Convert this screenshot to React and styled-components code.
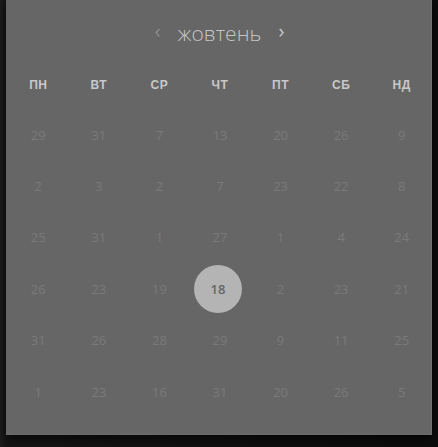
import React from 'react'
import styled, {createGlobalStyle} from 'styled-components'

const GlobalStyle = createGlobalStyle`
    html, body{
        margin: 0;
        padding: 0;
        background: #141414;
        width: 438px;
        height: 447px;
        overflow: hidden;
    }
`

const days = ['пн', 'вт', 'ср', 'чт', 'пт', 'сб', 'нд']

const weeks = [
    [29, 31, 7, 13, 20, 26, 9],
    [2, 3, 2, 7, 23, 22, 8],
    [25, 31, 1, 27, 1, 4, 24],
    [26, 23, 19, 18, 2, 23, 21],
    [31, 26, 28, 29, 9, 11, 25],
    [1, 23, 16, 31, 20, 26, 5],
]

function App(){
    return(
        <Page>
            <GlobalStyle/>
            <Panel>
                <Header>
                    <Arrow $dim>‹</Arrow>
                    <Month>жовтень</Month>
                    <Arrow>›</Arrow>
                </Header>
                <Grid>
                    {days.map(d => <DayName key={d}>{d}</DayName>)}
                </Grid>
                <Dates>
                    {weeks.map((week, w) => week.map((n, i) => (
                        <Cell key={w + '-' + i}>
                            {w === 3 && i === 3
                                ? <Selected>{n}</Selected>
                                : <DateNum>{n}</DateNum>}
                        </Cell>
                    )))}
                </Dates>
            </Panel>
        </Page>
    )
}

export default App

const Page = styled.div`
    width: 438px;
    height: 447px;
    padding-left: 6px;
    box-sizing: border-box;
    background: linear-gradient(to right, #1e1e1e 0, #161616 6px, #0c0c0c 100%);
`

const Panel = styled.div`
    width: 426px;
    height: 435px;
    background: #666666;
    border-right: 1px solid #707070;
    border-bottom: 1px solid #6c6c6c;
    box-sizing: border-box;
    box-shadow: 0 4px 10px rgba(0, 0, 0, 0.7);
    font-family: "Open Sans", "Liberation Sans", sans-serif;
`

const Header = styled.div`
    height: 66px;
    display: flex;
    align-items: center;
    justify-content: center;
    gap: 17px;
    padding-left: 2px;
`

const Month = styled.span`
    font-size: 21px;
    font-weight: 300;
    color: #c4c4c4;
`

const Arrow = styled.span`
    font-size: 20px;
    font-weight: 400;
    line-height: 1;
    margin-top: -4px;
    color: ${p => p.$dim ? '#8c8c8c' : '#c8c8c8'};
`

const Grid = styled.div`
    display: grid;
    grid-template-columns: repeat(7, 1fr);
    width: 424px;
    margin-left: 2px;
    height: 38px;
    align-items: center;
`

const DayName = styled.div`
    text-align: center;
    text-transform: uppercase;
    font-family: "Liberation Sans", Arial, sans-serif;
    font-weight: 700;
    font-size: 12px;
    color: #c8c8c8;
    letter-spacing: 0.5px;
`

const Dates = styled.div`
    display: grid;
    grid-template-columns: repeat(7, 1fr);
    grid-auto-rows: 51.4px;
    width: 424px;
    margin-left: 2px;
    margin-top: 5px;
`

const Cell = styled.div`
    display: flex;
    align-items: center;
    justify-content: center;
`

const DateNum = styled.span`
    font-size: 13px;
    color: #7a7a7a;
`

const Selected = styled.span`
    width: 48px;
    height: 48px;
    margin-right: 4px;
    border-radius: 50%;
    background: #b4b4b4;
    color: #666666;
    font-size: 13px;
    font-weight: 600;
    display: flex;
    align-items: center;
    justify-content: center;
`
